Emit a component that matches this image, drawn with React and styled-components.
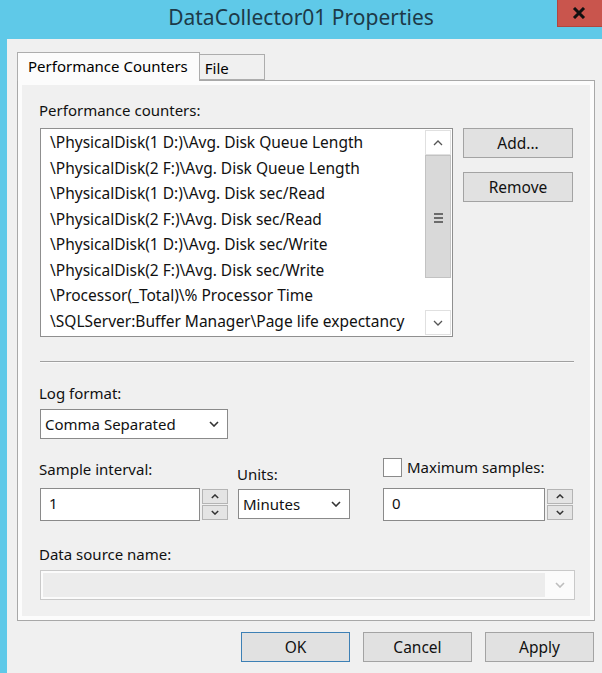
import React from "react";
import styled, { createGlobalStyle } from "styled-components";

const GlobalStyle = createGlobalStyle`
  html, body {
    margin: 0;
    padding: 0;
  }
  body {
    font-family: "Noto Sans", "Open Sans", sans-serif;
    background: #5fc9e8;
    color: #000;
  }
`;

const counters = [
  "\\PhysicalDisk(1 D:)\\Avg. Disk Queue Length",
  "\\PhysicalDisk(2 F:)\\Avg. Disk Queue Length",
  "\\PhysicalDisk(1 D:)\\Avg. Disk sec/Read",
  "\\PhysicalDisk(2 F:)\\Avg. Disk sec/Read",
  "\\PhysicalDisk(1 D:)\\Avg. Disk sec/Write",
  "\\PhysicalDisk(2 F:)\\Avg. Disk sec/Write",
  "\\Processor(_Total)\\% Processor Time",
  "\\SQLServer:Buffer Manager\\Page life expectancy",
];

function Chevron({ up, color = "#333", w = 10, h = 6, stroke = 1.6 }) {
  return (
    <svg width={w} height={h} viewBox="0 0 10 6">
      <polyline
        points={up ? "1,5 5,1 9,5" : "1,1 5,5 9,1"}
        fill="none"
        stroke={color}
        strokeWidth={stroke}
      />
    </svg>
  );
}

function SpinButtonsPair() {
  return (
    <SpinButtons>
      <SpinBtn>
        <Chevron up color="#333" w={8} h={5} stroke={1.8} />
      </SpinBtn>
      <SpinBtn>
        <Chevron color="#333" w={8} h={5} stroke={1.8} />
      </SpinBtn>
    </SpinButtons>
  );
}

function App() {
  return (
    <>
      <GlobalStyle />
      <Window>
        <TitleBar>
          <span />
          <Title>DataCollector01 Properties</Title>
          <CloseButton>
            <svg width="14" height="12" viewBox="0 0 14 12">
              <path d="M2 1 L12 11 M12 1 L2 11" stroke="#111" strokeWidth="3" />
            </svg>
          </CloseButton>
        </TitleBar>
        <Body>
          <TabStrip>
            <Tab $active>Performance Counters</Tab>
            <Tab>File</Tab>
          </TabStrip>
          <Panel>
            <Page>
              <Label>Performance counters:</Label>
              <ListRow>
                <ListBox>
                  <Items>
                    {counters.map((c) => (
                      <Item key={c}>{c}</Item>
                    ))}
                  </Items>
                  <ScrollBar>
                    <ScrollArrow>
                      <Chevron up color="#555" w={10} h={6} stroke={1.3} />
                    </ScrollArrow>
                    <Thumb>
                      <Grip>
                        <span />
                        <span />
                        <span />
                      </Grip>
                    </Thumb>
                    <Track />
                    <ScrollArrow>
                      <Chevron color="#555" w={10} h={6} stroke={1.3} />
                    </ScrollArrow>
                  </ScrollBar>
                </ListBox>
                <SideButtons>
                  <Button $w={110}>Add...</Button>
                  <Button $w={110}>Remove</Button>
                </SideButtons>
              </ListRow>
              <Separator />
              <Label $top={21}>Log format:</Label>
              <Combo $w={188} $top={7}>
                <span>Comma Separated</span>
                <Chevron color="#333" />
              </Combo>
              <FieldRow>
                <Column $w={188} $pad={2}>
                  <Label>Sample interval:</Label>
                  <Spin $top={10}>
                    <SpinInput $w={160}>1</SpinInput>
                    <SpinButtonsPair />
                  </Spin>
                </Column>
                <Column $w={112} $pad={7} $left={10}>
                  <Label>Units:</Label>
                  <Combo $w={112} $top={6}>
                    <span>Minutes</span>
                    <Chevron color="#333" />
                  </Combo>
                </Column>
                <Column $w={190} $pad={0} $left={33}>
                  <CheckRow>
                    <CheckBox />
                    <Label>Maximum samples:</Label>
                  </CheckRow>
                  <Spin $top={12}>
                    <SpinInput $w={162}>0</SpinInput>
                    <SpinButtonsPair />
                  </Spin>
                </Column>
              </FieldRow>
              <Label $top={24}>Data source name:</Label>
              <Combo $w={535} $top={7} $disabled>
                <DisabledFill />
                <Chevron color="#bdbdbd" />
              </Combo>
            </Page>
          </Panel>
          <Footer>
            <Button $w={109} $default>OK</Button>
            <Button $w={109}>Cancel</Button>
            <Button $w={109}>Apply</Button>
          </Footer>
        </Body>
      </Window>
    </>
  );
}

export default App;

const Window = styled.div`
  width: 602px;
  height: 673px;
  display: flex;
  flex-direction: column;
  background: #5fc9e8;
  overflow: hidden;
`;

const TitleBar = styled.div`
  height: 39px;
  flex-shrink: 0;
  display: grid;
  grid-template-columns: 45px 1fr 45px;
  align-items: start;
`;

const Title = styled.div`
  text-align: center;
  font-size: 21px;
  line-height: 35px;
  color: #1d3a48;
`;

const CloseButton = styled.div`
  height: 26px;
  background: #c9554d;
  border-left: 1px solid #b0463f;
  border-bottom: 1px solid #b0463f;
  display: flex;
  align-items: center;
  justify-content: center;
  padding-right: 2px;
`;

const Body = styled.div`
  flex: 1;
  margin-left: 7px;
  background: #f0f0f0;
  padding: 13px 7px 0 10px;
  display: flex;
  flex-direction: column;
`;

const TabStrip = styled.div`
  display: flex;
  align-items: flex-end;
  height: 28px;
  position: relative;
  z-index: 1;
`;

const Tab = styled.div`
  box-sizing: border-box;
  height: ${(p) => (p.$active ? "29px" : "26px")};
  margin-bottom: ${(p) => (p.$active ? "-1px" : "0")};
  margin-left: ${(p) => (p.$active ? "0" : "-1px")};
  padding: ${(p) => (p.$active ? "3px 11px 0 10px" : "3px 35px 0 5px")};
  background: ${(p) => (p.$active ? "#fcfcfc" : "#f0f0f0")};
  border: 1px solid #adadad;
  border-bottom: ${(p) => (p.$active ? "none" : "1px solid #adadad")};
  font-size: 15px;
  line-height: 20px;
  white-space: nowrap;
`;

const Panel = styled.div`
  height: 541px;
  box-sizing: border-box;
  border: 1px solid #a8a8a8;
  background: #fcfcfc;
  padding: 4px;
  display: flex;
`;

const Page = styled.div`
  flex: 1;
  background: #f0f0f0;
  padding: 16px 0 0 18px;
  display: flex;
  flex-direction: column;
  align-items: flex-start;
`;

const Label = styled.div`
  font-size: 15px;
  line-height: 18px;
  margin-top: ${(p) => p.$top || 0}px;
  margin-left: -1px;
  color: #111;
  white-space: nowrap;
`;

const ListRow = styled.div`
  display: flex;
  align-items: flex-start;
  margin-top: 9px;
  gap: 10px;
`;

const ListBox = styled.div`
  width: 413px;
  height: 209px;
  box-sizing: border-box;
  border: 1px solid #8f8f8f;
  background: #fff;
  display: flex;
  padding: 1px;
`;

const Items = styled.div`
  flex: 1;
  padding: 0 0 0 8px;
  overflow: hidden;
`;

const Item = styled.div`
  font-size: 15.5px;
  line-height: 25.5px;
  white-space: nowrap;
  color: #111;
`;

const ScrollBar = styled.div`
  width: 26px;
  display: flex;
  flex-direction: column;
  background: #fff;
`;

const ScrollArrow = styled.div`
  height: 25px;
  box-sizing: border-box;
  border: 1px solid #e0e0e0;
  display: flex;
  align-items: center;
  justify-content: center;
`;

const Thumb = styled.div`
  height: 123px;
  box-sizing: border-box;
  background: #d9d9d9;
  border: 1px solid #c2c2c2;
  display: flex;
  align-items: center;
  justify-content: center;
  padding-top: 2px;
`;

const Grip = styled.div`
  display: flex;
  flex-direction: column;
  gap: 2px;
  span {
    display: block;
    width: 9px;
    height: 2px;
    background: #6b6b6b;
  }
`;

const Track = styled.div`
  flex: 1;
  background: #fff;
`;

const SideButtons = styled.div`
  display: flex;
  flex-direction: column;
  gap: 14px;
`;

const Button = styled.div`
  width: ${(p) => p.$w}px;
  height: 30px;
  box-sizing: border-box;
  background: #e1e1e1;
  border: 1px solid ${(p) => (p.$default ? "#3d80b5" : "#a3a3a3")};
  display: flex;
  align-items: center;
  justify-content: center;
  font-size: 15.5px;
  color: #111;
`;

const Separator = styled.div`
  width: 534px;
  height: 1px;
  background: #a0a0a0;
  border-bottom: 1px solid #fafafa;
  margin-top: 24px;
`;

const Combo = styled.div`
  width: ${(p) => p.$w}px;
  height: 30px;
  margin-top: ${(p) => p.$top || 0}px;
  box-sizing: border-box;
  border: 1px solid ${(p) => (p.$disabled ? "#c9c9c9" : "#8a8a8a")};
  background: ${(p) => (p.$disabled ? "#fbfbfb" : "#fff")};
  display: flex;
  align-items: center;
  justify-content: space-between;
  padding: ${(p) => (p.$disabled ? "2px 9px 2px 2px" : "0 8px 0 4px")};
  font-size: 15px;
  color: #111;
`;

const DisabledFill = styled.div`
  align-self: stretch;
  flex: 1;
  margin-right: 10px;
  background: #ececec;
`;

const FieldRow = styled.div`
  display: flex;
  align-items: flex-start;
  margin-top: 19px;
`;

const Column = styled.div`
  width: ${(p) => p.$w}px;
  margin-left: ${(p) => p.$left || 0}px;
  padding-top: ${(p) => p.$pad}px;
  display: flex;
  flex-direction: column;
  align-items: flex-start;
`;

const CheckRow = styled.div`
  display: flex;
  align-items: center;
  gap: 6px;
  height: 18px;
`;

const CheckBox = styled.div`
  width: 19px;
  height: 19px;
  box-sizing: border-box;
  border: 1px solid #8a8a8a;
  background: #fff;
`;

const Spin = styled.div`
  display: flex;
  gap: 2px;
  margin-top: ${(p) => p.$top}px;
`;

const SpinInput = styled.div`
  width: ${(p) => p.$w}px;
  height: 33px;
  box-sizing: border-box;
  border: 1px solid #8a8a8a;
  background: #fff;
  font-size: 15px;
  line-height: 29px;
  padding-left: 8px;
  color: #111;
`;

const SpinButtons = styled.div`
  width: 26px;
  display: flex;
  flex-direction: column;
  gap: 1px;
  padding-top: 1px;
`;

const SpinBtn = styled.div`
  height: 15px;
  box-sizing: border-box;
  border: 1px solid #b4b4b4;
  background: #e4e4e4;
  display: flex;
  align-items: center;
  justify-content: center;
`;

const Footer = styled.div`
  display: flex;
  justify-content: flex-end;
  gap: 13px;
  margin-top: 11px;
  padding-right: 1px;
`;
